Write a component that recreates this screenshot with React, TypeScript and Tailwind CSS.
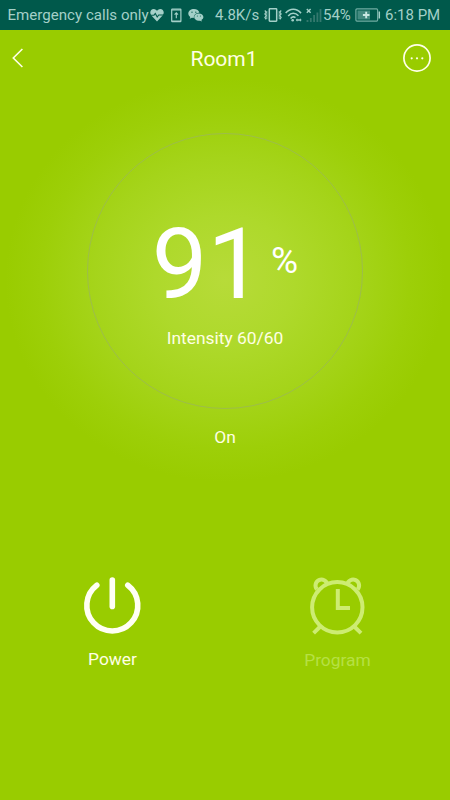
import type { ReactNode } from 'react'

function HeartIcon() {
  return (
    <svg className="h-[14px] w-[14px] shrink-0" viewBox="0 0 14 14" fill="none">
      <path d="M7 13.5 1.2 7.2C-.9 4.4.8 1 3.7 1 5.4 1 6.5 2 7 3c.5-1 1.6-2 3.3-2 2.9 0 4.6 3.4 2.5 6.2Z" fill="#a4d0c8" />
      <path d="M0 7.2h4l1.3-1.7L7.2 9l1.5-2H14" stroke="#00594b" strokeWidth="1.1" />
    </svg>
  )
}

function PhoneUploadIcon() {
  return (
    <svg className="h-[15px] w-[11px] shrink-0" viewBox="0 0 11 15" fill="none" stroke="#a4d0c8">
      <rect x=".7" y="1" width="9.2" height="12.7" rx=".6" strokeWidth="1.2" />
      <path d="M1 1.8h9M1 13h9" strokeWidth="1.2" />
      <path d="M5.3 10.3V5M3.6 6.6l1.7-1.8L7 6.6" strokeWidth="1.1" />
    </svg>
  )
}

function ChatIcon() {
  return (
    <svg className="h-[14px] w-[16px] shrink-0" viewBox="0 0 16 14">
      <path d="M6 1C2.8 1 .3 3 .3 5.6c0 1.5.8 2.7 2 3.5l-.6 1.7 2.2-1 1.9.3C5.6 6.8 8 4.7 11.4 4.7 11 2.5 8.7 1 6 1Z" fill="#a4d0c8" />
      <path d="M10.8 5.4c-2.7 0-4.6 1.7-4.6 3.7 0 2.3 2.5 4.2 5.9 3.6l1.8.9-.5-1.5c1.3-.8 2-1.8 2-3 0-2-2-3.7-4.6-3.7Z" fill="#a4d0c8" />
      <g fill="#00594b">
        <circle cx="4" cy="4.2" r=".65" />
        <circle cx="7.8" cy="4.2" r=".65" />
        <circle cx="9.3" cy="8" r=".5" />
        <circle cx="12.4" cy="8" r=".5" />
      </g>
    </svg>
  )
}

function VibrateIcon() {
  return (
    <svg className="h-[14px] w-[18px] shrink-0" viewBox="0 0 18 14" fill="none" stroke="#a4d0c8">
      <rect x="5.3" y=".8" width="7.4" height="12.4" rx=".6" strokeWidth="1.5" />
      <path d="m.8 2.5 1.4 1.7L.9 6l1.3 1.6L.9 9.4l1.3 1.9M17.2 2.5l-1.4 1.7L17.1 6l-1.3 1.6 1.3 1.8-1.3 1.9" strokeWidth="1.2" />
      <path d="M2.8 3v8M15.2 3v8" strokeWidth=".8" />
    </svg>
  )
}

function WifiIcon() {
  return (
    <svg className="h-[14px] w-[17px] shrink-0" viewBox="0 0 17 14" fill="none" stroke="#a4d0c8" strokeWidth="1.6">
      <path d="M.7 5.1C5 0 11.5 0 16 5.1" />
      <path d="M3.2 7.9c3-3.5 7-3.5 10.3-.2" />
      <path d="M5.6 10.5c1.5-1.7 3.3-1.9 4.9-.9" />
      <circle cx="7.7" cy="12.2" r="1.3" fill="#a4d0c8" stroke="none" />
      <path d="m10.8 12 1.5-1.7v3.4Zm5.8 0-1.5-1.7v3.4Z" fill="#a4d0c8" stroke="none" />
      <path d="M12 12h3.5" strokeWidth="1.5" />
    </svg>
  )
}

function SignalIcon() {
  return (
    <svg className="h-[15px] w-[16px] shrink-0" viewBox="0 0 16 15" fill="none">
      <path d="m.8 1 3.8 3.8M4.6 1 .8 4.800" stroke="#a4d0c8" strokeWidth="1.4" />
      <path d="M1.5 12v2M4.8 10v4M8.1 7v7M11.4 4.5V14M14.5 1v13" stroke="#34796e" strokeWidth="1.8" />
    </svg>
  )
}

function BatteryIcon() {
  return (
    <svg className="h-[14px] w-[26px] shrink-0" viewBox="0 0 26 14" fill="none">
      <rect x="2.5" y="2.5" width="12.5" height="9" fill="#438b80" />
      <rect x=".9" y=".9" width="21.7" height="12.2" rx="1" stroke="#70aca2" strokeWidth="1.2" />
      <path d="M24.3 3.5v7" stroke="#a4d0c8" strokeWidth="1.5" />
      <path d="M11.2 3.7v6.6M7.9 7h6.6" stroke="#c9e8e2" strokeWidth="1.9" />
    </svg>
  )
}

function StatusBar() {
  return (
    <div className="flex h-[30px] items-center whitespace-nowrap bg-[#00594b] pl-[7.5px] text-[15px] text-[#a4d0c8]">
      <span className="w-[142.5px] shrink-0 pt-px text-[15.1px]">Emergency calls only</span>
      <HeartIcon />
      <div className="ml-[7px] flex">
        <PhoneUploadIcon />
      </div>
      <div className="ml-[6px] flex">
        <ChatIcon />
      </div>
      <span className="ml-[11px] w-[49px] shrink-0 pt-px">4.8K/s</span>
      <VibrateIcon />
      <div className="ml-[3px] flex">
        <WifiIcon />
      </div>
      <div className="ml-[4px] flex">
        <SignalIcon />
      </div>
      <span className="ml-px w-[32px] shrink-0">54%</span>
      <BatteryIcon />
      <span className="ml-[4px] pt-px">6:18 PM</span>
    </div>
  )
}

function Header() {
  return (
    <header className="flex h-[56px] items-center justify-between pl-[11px] pr-[19px]">
      <button className="flex w-[34px]" aria-label="Back">
        <svg className="h-[20px] w-[13px]" viewBox="0 0 13 20" fill="none" stroke="#ffffe8" strokeWidth="1.6">
          <path d="M11.4 1 2.3 10l9.1 9" />
        </svg>
      </button>
      <h1 className="pt-[2px] text-[21px] leading-[26px]">Room1</h1>
      <button className="flex" aria-label="More">
        <svg className="h-[28px] w-[28px]" viewBox="0 0 28 28" fill="none">
          <circle cx="14" cy="14" r="13.1" stroke="#ffffe8" strokeWidth="1.7" />
          <g fill="#ffffe8">
            <circle cx="8.7" cy="14.3" r="1.1" />
            <circle cx="14" cy="14.3" r="1.1" />
            <circle cx="19.3" cy="14.3" r="1.1" />
          </g>
        </svg>
      </button>
    </header>
  )
}

function Dial() {
  return (
    <div className="mx-auto mt-[47px] flex h-[276px] w-[276px] flex-col items-center rounded-full border border-[#9dbd4b] pt-[80px]">
      <div className="flex items-start text-white">
        <span className="text-[99px] leading-[100px]">91</span>
        <span className="ml-[8px] mt-[25px] text-[37px] leading-[43px]">%</span>
      </div>
      <p className="mt-[13px] text-[17.4px] leading-[22px]">Intensity 60/60</p>
    </div>
  )
}

function PowerIcon() {
  return (
    <svg className="h-[60px] w-[60px]" viewBox="0 0 60 60" fill="none" stroke="#fffff4" strokeWidth="5.6" strokeLinecap="round">
      <path d="M29.3 4.1v26.3" />
      <path d="M13.8 9.2a25.5 25.5 0 1 0 31 0" />
    </svg>
  )
}

function AlarmIcon() {
  return (
    <svg className="h-[60px] w-[60px]" viewBox="0 0 60 60" fill="none" stroke="#cdec72" strokeWidth="4">
      <circle cx="29.3" cy="31.3" r="25.2" />
      <path d="M29.8 13v19H42" />
      <path d="m12.6 50.3-7 6.8M46 50.3l7 6.800" />
      <path d="M8.9 13.4a6 6 0 1 1 10.500-5M39.200 8.400a6 6 0 1 1 10.500 5" />
    </svg>
  )
}

function Action({ label, children, className }: { label: string; children: ReactNode; className?: string }) {
  return (
    <button className={className}>
      {children}
      <span className="text-[17.4px] leading-[22px]">{label}</span>
    </button>
  )
}

export default function App() {
  return (
    <div className="h-[800px] w-[450px] overflow-hidden bg-[#99cc00] font-['Roboto',sans-serif] text-[#ffffe4]">
      <StatusBar />
      <main className="h-[770px] bg-[radial-gradient(ellipse_220px_202px_at_225px_250px,#b7db39_0%,#aed92b_32%,#a5d41a_60%,#9dcf08_84%,#99cc00_100%)]">
        <Header />
        <Dial />
        <p className="mt-[17px] text-center text-[17.4px] leading-[22px]">On</p>
        <div className="mt-[128px] grid grid-cols-2">
          <Action label="Power" className="flex flex-col items-center gap-[12px]">
            <PowerIcon />
          </Action>
          <Action label="Program" className="flex flex-col items-center gap-[13px] text-[#b6e044]">
            <AlarmIcon />
          </Action>
        </div>
      </main>
    </div>
  )
}
